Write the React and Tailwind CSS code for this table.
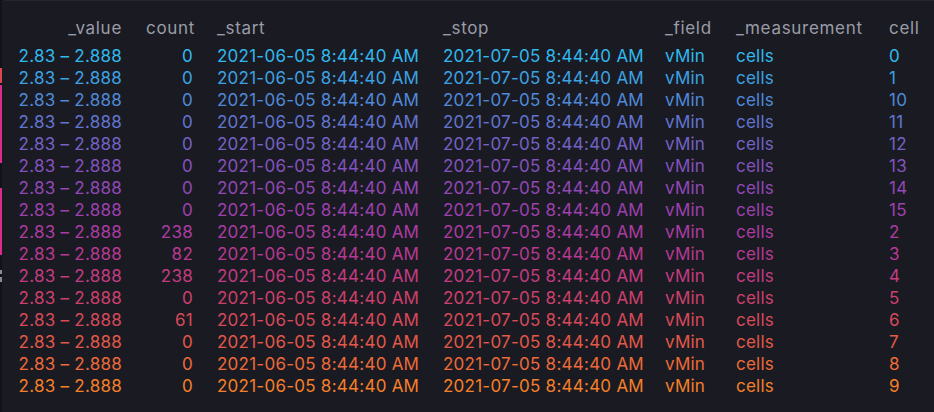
import React from "react";

const colors = [
  "#31B8EE", "#3DA2E4", "#4F8ADA", "#6275D0", "#7462C6", "#8452BE",
  "#9248B6", "#9E40AE", "#AC3BA2", "#B83992", "#C43B80", "#CE406C",
  "#D8495A", "#E35849", "#ED6A39", "#F67F29",
];

const cells = ["0", "1", "10", "11", "12", "13", "14", "15", "2", "3", "4", "5", "6", "7", "8", "9"];
const counts = ["0", "0", "0", "0", "0", "0", "0", "0", "238", "82", "238", "0", "61", "0", "0", "0"];

const grid = "grid grid-cols-[128px_71px_226px_222px_71px_153px_57px]";

export default function App() {
  return (
    <div
      className="flex h-[412px] w-[934px] bg-[#121318] overflow-hidden"
      style={{ fontFamily: "Inter, 'Noto Sans', sans-serif" }}
    >
      <div className="relative w-[2px] shrink-0">
        <div className="absolute left-0 top-[68px] h-[15px] w-[2px] bg-[#d9474f]" />
        <div className="absolute left-0 top-[85px] h-[78px] w-[2px] bg-[#d92c8e]" />
        <div className="absolute left-0 top-[188px] h-[67px] w-[2px] bg-[#d92c8e]" />
        <div className="absolute left-0 top-[270px] h-[4px] w-[2px] bg-[#8a8b93]" />
        <div className="absolute left-0 top-[277px] h-[5px] w-[2px] bg-[#8a8b93]" />
      </div>
      <div className="flex-1 rounded-tl-[3px] border-t border-[#24252d] bg-[#1a1b22] pt-[16px] pl-[4px] text-[17px]">
        <div className={`${grid} h-[22px] leading-[22px] tracking-[0.7px] text-[#9a9ca8] whitespace-nowrap`}>
          <div className="px-3 text-right">_value</div>
          <div className="px-3 text-right">count</div>
          <div className="px-3">_start</div>
          <div className="px-3">_stop</div>
          <div className="px-3">_field</div>
          <div className="px-3">_measurement</div>
          <div className="px-3">cell</div>
        </div>
        <div className="mt-[6px]">
          {cells.map((c, i) => (
            <div
              key={i}
              className={`${grid} h-[22px] leading-[22px] tracking-[0.25px] whitespace-nowrap`}
              style={{ color: colors[i] }}
            >
              <div className="px-3 text-right">2.83 – 2.888</div>
              <div className="px-3 text-right">{counts[i]}</div>
              <div className="px-3">2021-06-05 8:44:40 AM</div>
              <div className="px-3">2021-07-05 8:44:40 AM</div>
              <div className="px-3">vMin</div>
              <div className="px-3">cells</div>
              <div className="px-3">{c}</div>
            </div>
          ))}
        </div>
      </div>
    </div>
  );
}
